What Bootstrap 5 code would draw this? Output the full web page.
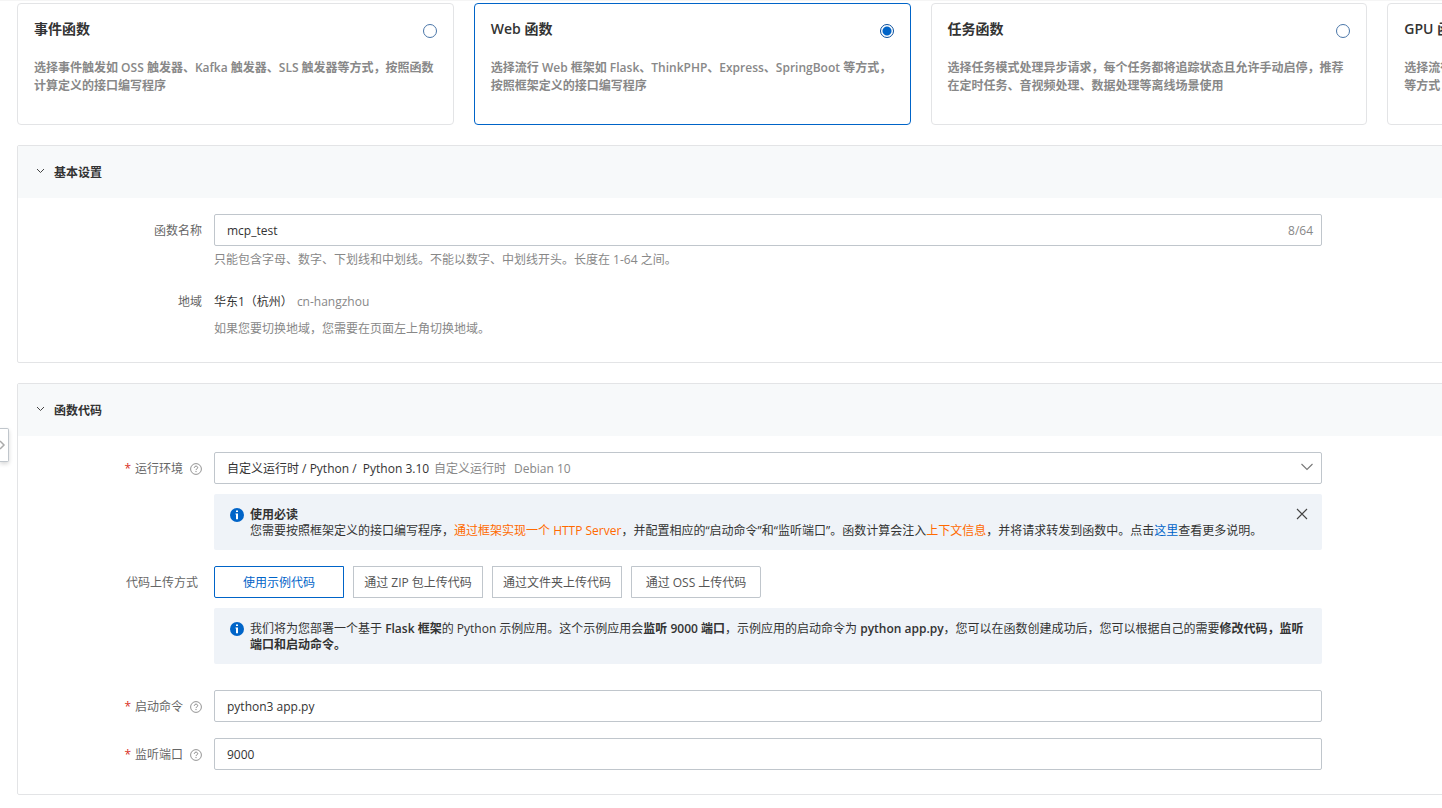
<!DOCTYPE html>
<html lang="zh-CN">
<head>
<meta charset="utf-8">
<meta name="viewport" content="width=device-width, initial-scale=1">
<title>创建函数</title>
<link href="https://cdn.jsdelivr.net/npm/bootstrap@5.3.0/dist/css/bootstrap.min.css" rel="stylesheet">
<style>
  body {
    font-family: "Open Sans", "Noto Sans CJK SC", sans-serif;
    font-size: 12px;
    line-height: 18px;
    color: #333;
    background: #fff;
  }
  a { text-decoration: none; color: #0064c8; }
  .page-clip { overflow: hidden; border-top: 1px solid #f5f5f5; min-height: 100vh; }
  /* the form is wider than the window and is cut off at its right edge */
  .page-main { width: 126.5vw; padding: 2px 0 12px 17px; }
  .page-main, .type-list { display: flex; gap: 20px; }
  .page-main { flex-direction: column; }

  .type-card {
    flex: 1 1 0; min-width: 0; height: 122px; padding: 15px 16px;
    border: 1px solid #e3e4e6; border-radius: 4px; cursor: pointer;
  }
  .type-card.active { border-color: #0064c8; }
  .type-name { font-size: 14px; line-height: 20px; font-weight: 600; }
  .type-desc { display: block; margin-top: 20px; font-weight: 600; color: #888; }
  .type-radio {
    appearance: none; width: 14px; height: 14px; margin: 5px 0 0;
    border: 1px solid #4a76a8; border-radius: 50%; background: #fff; flex: none;
  }
  .type-radio:checked { border-color: #0a4f9c; background: radial-gradient(circle, #0064c8 0 4px, #fff 5px); }

  .panel { border: 1px solid #e3e4e6; border-radius: 2px; }
  .panel-head { height: 52px; padding: 2px 18px 0; background: #f7f9fa; font-size: 12px; line-height: 18px; font-weight: 600; }
  .panel-toggle { display: flex; align-items: center; gap: 9px; border: 0; padding: 0; background: none; font-weight: 600; color: #333; }
  .panel-toggle svg { margin-bottom: 4px; }
  .panel-body { max-width: 1304px; padding: 16px 0 24px; display: flex; flex-direction: column; }

  .field { display: flex; gap: 12px; }
  .field-name { flex: 0 0 184px; display: flex; justify-content: flex-end; align-items: center; height: 32px; padding-top: 2px; color: #666; }
  .field-name svg { margin-left: 7px; }
  .req { color: #d93026; margin-right: 4px; }
  .field-main { flex: 1 1 0; min-width: 0; }
  .box {
    display: flex; align-items: center; height: 32px; padding: 2px 8px 0 12px;
    border: 1px solid #c0c6cc; border-radius: 2px; background: #fff;
  }
  .box input { flex: 1; min-width: 0; border: 0; padding: 0; outline: 0; color: #333; background: none; }
  .box select { appearance: none; border: 0; padding: 0; outline: 0; color: #333; background: none; }
  .box svg { margin-bottom: 4px; }
  .dim { color: #888; }
  .hint { margin: 5px 0 0; color: #888; }
  .region-line { height: 32px; padding-top: 1px; }
  .region-line + .hint { margin-top: 3px; }

  .notice { display: flex; gap: 6px; min-height: 56px; margin-top: 10px; padding: 13px 16px 11px; background: #eff3f8; border-radius: 2px; line-height: 16px; }
  .notice > svg { flex: none; margin-top: 1px; }
  .notice strong { font-weight: 600; }
  .notice .em-link { color: #ff6a00; }
  .notice-close { border: 0; padding: 0; background: none; width: 12px; height: 12px; display: flex; margin: 1px -2px 0 0; }

  .modes { gap: 9px; }
  .mode { width: 130px; height: 32px; padding: 2px 0 0; border: 1px solid #c0c6cc; background: #fff; color: #555; }
  .mode.active { border-color: #0064c8; color: #0064c8; }
  .mode:first-child { border-radius: 2px 0 0 2px; }
  .mode:last-child { border-radius: 0 2px 2px 0; }
  .command { margin-top: 26px; }

  .side-handle {
    position: fixed; left: 0; top: 428px; width: 9px; height: 34px; padding: 0;
    border: 1px solid #c0c6cc; border-left: 0; border-radius: 0 2px 2px 0; background: #fff;
    box-shadow: 0 2px 4px rgba(0,0,0,.16); display: flex; align-items: center;
  }
</style>
</head>
<body>
<svg class="d-none" aria-hidden="true">
  <symbol id="i-down" viewBox="0 0 9 6"><path d="M1 1l3.500 3.500L8 1" fill="none" stroke="#444" stroke-width="1"/></symbol>
  <symbol id="i-help" viewBox="0 0 12 12"><circle cx="6" cy="6" r="5.4" fill="none" stroke="#888" stroke-width=".9"/><path d="M4.3 4.8c0-2.2 3.4-2.2 3.4-.1 0 1.200-1.700 1.100-1.700 2.400" fill="none" stroke="#888" stroke-width="1"/><path d="M6 8v1.100" stroke="#888" stroke-width="1"/></symbol>
  <symbol id="i-info" viewBox="0 0 14 14"><circle cx="7" cy="7" r="7" fill="#0064c8"/><path d="M6 2.500h2v1.600H6zM5.500 5.400H8v5.800H6V6.400h-.5z" fill="#fff"/></symbol>
</svg>

<div class="page-clip">
  <main class="page-main">
    <div class="type-list" role="radiogroup" aria-label="函数类型">
      <label class="type-card">
        <span class="d-flex justify-content-between"><span class="type-name">事件函数</span><input class="type-radio" type="radio" name="kind"></span>
        <span class="type-desc">选择事件触发如 OSS 触发器、Kafka 触发器、SLS 触发器等方式，按照函数计算定义的接口编写程序</span>
      </label>
      <label class="type-card active">
        <span class="d-flex justify-content-between"><span class="type-name">Web 函数</span><input class="type-radio" type="radio" name="kind" checked></span>
        <span class="type-desc">选择流行 Web 框架如 Flask、ThinkPHP、Express、SpringBoot 等方式，按照框架定义的接口编写程序</span>
      </label>
      <label class="type-card">
        <span class="d-flex justify-content-between"><span class="type-name">任务函数</span><input class="type-radio" type="radio" name="kind"></span>
        <span class="type-desc">选择任务模式处理异步请求，每个任务都将追踪状态且允许手动启停，推荐在定时任务、音视频处理、数据处理等离线场景使用</span>
      </label>
      <label class="type-card">
        <span class="d-flex justify-content-between"><span class="type-name">GPU 函数</span><input class="type-radio" type="radio" name="kind"></span>
        <span class="type-desc">选择流行<br>等方式，</span>
      </label>
    </div>

    <section class="panel">
      <h2 class="panel-head d-flex align-items-center m-0">
        <button class="panel-toggle" type="button" aria-expanded="true"><svg width="9" height="6"><use href="#i-down"/></svg>基本设置</button>
      </h2>
      <div class="panel-body">
        <div class="field">
          <label class="field-name" for="fn-name">函数名称</label>
          <div class="field-main">
            <div class="box"><input id="fn-name" type="text" value="mcp_test" maxlength="64"><span class="dim">8/64</span></div>
            <p class="hint">只能包含字母、数字、下划线和中划线。不能以数字、中划线开头。长度在 1-64 之间。</p>
          </div>
        </div>
        <div class="field mt-3">
          <span class="field-name">地域</span>
          <div class="field-main">
            <div class="d-flex align-items-center gap-1 region-line">
              <span>华东1（杭州）</span><span class="dim">cn-hangzhou</span>
            </div>
            <p class="hint">如果您要切换地域，您需要在页面左上角切换地域。</p>
          </div>
        </div>
      </div>
    </section>

    <section class="panel">
      <h2 class="panel-head d-flex align-items-center m-0">
        <button class="panel-toggle" type="button" aria-expanded="true"><svg width="9" height="6"><use href="#i-down"/></svg>函数代码</button>
      </h2>
      <div class="panel-body">
        <div class="field">
          <label class="field-name" for="runtime"><span class="req">*</span>运行环境<svg width="12" height="12"><use href="#i-help"/></svg></label>
          <div class="field-main">
            <div class="box">
              <select id="runtime"><option>自定义运行时 / Python /&nbsp; Python 3.10</option></select>
              <span class="dim ms-1">自定义运行时</span><span class="dim ms-2">Debian 10</span>
              <svg class="ms-auto" width="12" height="8" viewBox="0 0 12 8"><path d="M.5 1L6 6.500 11.500 1" fill="none" stroke="#777" stroke-width="1.100"/></svg>
            </div>
            <div class="notice">
              <svg width="14" height="14"><use href="#i-info"/></svg>
              <div class="flex-grow-1">
                <strong class="d-block">使用必读</strong>
                您需要按照框架定义的接口编写程序，<a class="em-link" href="#">通过框架实现一个 HTTP Server</a>，并配置相应的“启动命令”和“监听端口”。函数计算会注入<a class="em-link" href="#">上下文信息</a>，并将请求转发到函数中。点击<a href="#">这里</a>查看更多说明。
              </div>
              <button class="notice-close" type="button" aria-label="关闭"><svg width="12" height="12" viewBox="0 0 12 12"><path d="M1 1l10 10M11 1L1 11" stroke="#444" stroke-width="1.100"/></svg></button>
            </div>
          </div>
        </div>
        <div class="field mt-3">
          <span class="field-name pe-1">代码上传方式</span>
          <div class="field-main">
            <div class="d-flex modes">
              <button class="mode active" type="button">使用示例代码</button>
              <button class="mode" type="button">通过 ZIP 包上传代码</button>
              <button class="mode" type="button">通过文件夹上传代码</button>
              <button class="mode" type="button">通过 OSS 上传代码</button>
            </div>
            <div class="notice">
              <svg width="14" height="14"><use href="#i-info"/></svg>
              <div>我们将为您部署一个基于 <strong>Flask 框架</strong>的 Python 示例应用。这个示例应用会<strong>监听 9000 端口</strong>，示例应用的启动命令为 <strong>python app.py</strong>，您可以在函数创建成功后，您可以根据自己的需要<strong>修改代码，监听端口和启动命令。</strong></div>
            </div>
          </div>
        </div>
        <div class="field command">
          <label class="field-name" for="command"><span class="req">*</span>启动命令<svg width="12" height="12"><use href="#i-help"/></svg></label>
          <div class="field-main"><div class="box"><input id="command" type="text" value="python3 app.py"></div></div>
        </div>
        <div class="field mt-3">
          <label class="field-name" for="port"><span class="req">*</span>监听端口<svg width="12" height="12"><use href="#i-help"/></svg></label>
          <div class="field-main"><div class="box"><input id="port" type="text" value="9000"></div></div>
        </div>
      </div>
    </section>
  </main>
</div>
<button class="side-handle" type="button" aria-label="展开侧栏"><svg width="6" height="12" viewBox="0 0 6 12"><path d="M0 2l4 4-4 4" fill="none" stroke="#aaa" stroke-width="1.500"/></svg></button>
<script src="https://cdn.jsdelivr.net/npm/bootstrap@5.3.0/dist/js/bootstrap.bundle.min.js"></script>
</body>
</html>
